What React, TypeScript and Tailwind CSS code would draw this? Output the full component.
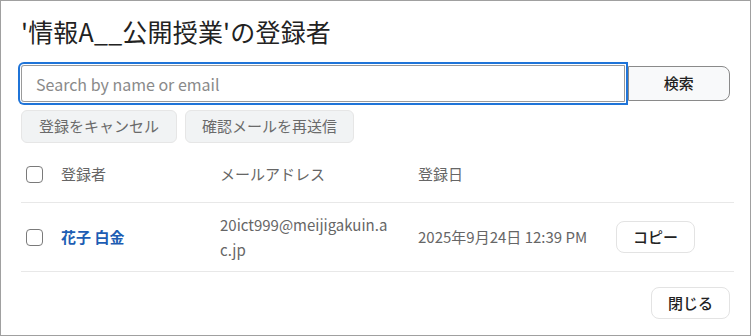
import React from "react";

const FONT = { fontFamily: '"Noto Sans CJK JP", "Noto Sans", sans-serif' };

function Check() {
  return (
    <span className="inline-block w-[17px] h-[17px] rounded-[4px] border-[1.5px] border-[#7a7a7a] bg-white" />
  );
}

export default function App() {
  return (
    <div
      style={FONT}
      className="w-[751px] h-[336px] border border-[#a0a0a0] bg-white px-5 pt-[12px] text-[#222] overflow-hidden"
    >
      <h1 className="text-[25px] leading-[36px] font-normal tracking-[0.2px]">
        '情報A__公開授業'の登録者
      </h1>

      {/* 検索 */}
      <div className="flex items-center mt-[16px] h-[37px]">
        <input
          readOnly
          autoFocus
          placeholder="Search by name or email"
          className="relative z-10 w-[607px] h-[37px] border border-[#9a9a9a] rounded-l-[3px] px-[14px] text-[16px] text-[#333] placeholder:text-[#8a8a8a] outline-none shadow-[0_0_0_1px_#ffffff,0_0_0_3px_#1f74d8] caret-[#222]"
          style={FONT}
        />
        <button className="ml-[3px] w-[103px] h-[35px] border border-[#8a8a8a] rounded-r-[8px] bg-[#f8f9fa] text-[15px] font-medium text-[#222]">
          検索
        </button>
      </div>

      {/* 操作ボタン */}
      <div className="flex gap-2 mt-[8px]">
        <button className="w-[156px] h-[33px] rounded-[6px] border border-[#e6e6e6] bg-[#f1f3f4] text-[15px] text-[#6a6a6a]">
          登録をキャンセル
        </button>
        <button className="w-[169px] h-[33px] rounded-[6px] border border-[#e6e6e6] bg-[#f1f3f4] text-[15px] text-[#6a6a6a]">
          確認メールを再送信
        </button>
      </div>

      {/* 一覧 */}
      <div className="mt-[6px] w-[713px]">
        <div className="grid grid-cols-[40px_159px_198px_198px_118px] items-center h-[54px] pb-[2px] border-b border-[#e8e8e8] text-[15px] text-[#666]">
          <div className="pl-[5px] flex items-center">
            <Check />
          </div>
          <div>登録者</div>
          <div>メールアドレス</div>
          <div>登録日</div>
          <div />
        </div>
        <div className="grid grid-cols-[40px_159px_198px_198px_118px] items-center h-[69px] border-b border-[#e8e8e8] text-[15px]">
          <div className="pl-[5px] flex items-center">
            <Check />
          </div>
          <div className="font-bold text-[#1d5db3]">花子 白金</div>
          <div className="w-[172px] break-all leading-[25px] text-[#666]">
            20ict999@meijigakuin.ac.jp
          </div>
          <div className="text-[#666]">2025年9月24日 12:39 PM</div>
          <div>
            <button className="w-[79px] h-[32px] rounded-[8px] border border-[#e3e3e3] bg-white text-[15px] font-medium text-[#222]">
              コピー
            </button>
          </div>
        </div>
        <div className="flex justify-end pr-[4px] mt-[15px]">
          <button className="w-[79px] h-[32px] rounded-[8px] border border-[#e3e3e3] bg-white text-[15px] font-medium text-[#222]">
            閉じる
          </button>
        </div>
      </div>
    </div>
  );
}
